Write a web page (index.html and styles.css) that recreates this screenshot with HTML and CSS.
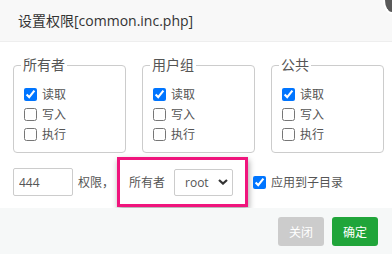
FILE: index.html
```html
<!DOCTYPE html>
<html>
<head>
    <meta charset="UTF-8">
    <title>设置权限</title>
    <link rel="stylesheet" href="styles.css">
</head>
<body>
    <div class="layer">
        <div class="layer-title">
            <span>设置权限[common.inc.php]</span>
            <span class="layer-close"></span>
        </div>

        <div class="layer-content">
            <div class="groups">
                <fieldset class="group">
                    <legend>所有者</legend>
                    <label class="check"><input type="checkbox" checked>读取</label>
                    <label class="check"><input type="checkbox">写入</label>
                    <label class="check"><input type="checkbox">执行</label>
                </fieldset>
                <fieldset class="group">
                    <legend>用户组</legend>
                    <label class="check"><input type="checkbox" checked>读取</label>
                    <label class="check"><input type="checkbox">写入</label>
                    <label class="check"><input type="checkbox">执行</label>
                </fieldset>
                <fieldset class="group">
                    <legend>公共</legend>
                    <label class="check"><input type="checkbox" checked>读取</label>
                    <label class="check"><input type="checkbox">写入</label>
                    <label class="check"><input type="checkbox">执行</label>
                </fieldset>
            </div>

            <div class="perm-row">
                <input class="perm-input" type="text" value="444">
                <span class="perm-label">权限，</span>
                <div class="owner-box">
                    <span>所有者</span>
                    <div class="select-box">
                        <span>root</span>
                        <svg width="10" height="6" viewBox="0 0 10 6">
                            <path d="M1 1 L5 4.6 L9 1" fill="none" stroke="#333" stroke-width="2.2"></path>
                        </svg>
                    </div>
                </div>
                <label class="check sub-dir"><input type="checkbox" checked>应用到子目录</label>
            </div>
        </div>

        <div class="layer-footer">
            <button class="btn btn-close">关闭</button>
            <button class="btn btn-ok">确定</button>
        </div>
    </div>
</body>
</html>
```

FILE: styles.css
```css
body {
    margin: 0;
    background: #fff;
    font-family: "Open Sans", "Noto Sans CJK SC", sans-serif;
}

.layer {
    width: 392px;
    height: 254px;
    overflow: hidden;
    display: flex;
    flex-direction: column;
}

.layer-title {
    height: 41px;
    display: flex;
    justify-content: space-between;
    align-items: flex-start;
    padding-left: 18px;
    font-size: 14px;
    line-height: 41px;
    color: #333;
    background: #f8f8f8;
    border-bottom: 1px solid #eee;
}

/* only the lower left corner of the round close button is in view */
.layer-close {
    width: 7px;
    height: 12px;
    margin-top: 0;
    background: #595959;
    border-left: 2px solid #fff;
    border-bottom: 2px solid #fff;
    border-bottom-left-radius: 100% 100%;
}

.layer-content {
    padding: 13px 0 0 13px;
}

.groups {
    display: flex;
    gap: 16px;
}

.group {
    width: 113px;
    box-sizing: border-box;
    margin: 0;
    padding: 9px 7px 8px 7px;
    border: 1px solid #ccc;
    border-radius: 4px;
    display: flex;
    flex-direction: column;
}

.group legend {
    padding: 0 2px;
    font-size: 14px;
    line-height: 20px;
    color: #555;
}

.check {
    display: flex;
    align-items: center;
    height: 20px;
    font-size: 12px;
    color: #555;
}

.check input {
    width: 13px;
    height: 13px;
    margin: 0 5px 0 3px;
}

.perm-row {
    display: flex;
    align-items: center;
    margin-top: 4px;
}

.perm-input {
    width: 60px;
    height: 28px;
    box-sizing: border-box;
    border: 1px solid #ccc;
    border-radius: 2px;
    padding: 0 5px;
    font-family: inherit;
    font-size: 12px;
    color: #555;
}

.perm-label {
    margin-left: 5px;
    font-size: 12px;
    color: #555;
}

.owner-box {
    display: flex;
    align-items: center;
    height: 50px;
    box-sizing: border-box;
    margin-left: 3px;
    padding: 0 12px 0 9px;
    border: 3px solid #f0157d;
    box-shadow: 1px 3px 6px rgba(0, 0, 0, 0.35);
    font-size: 12px;
    color: #555;
}

.select-box {
    display: flex;
    align-items: center;
    justify-content: space-between;
    width: 59px;
    height: 27px;
    box-sizing: border-box;
    margin-left: 9px;
    padding: 0 4px 0 10px;
    border: 1px solid #ccc;
    border-radius: 2px;
    color: #555;
}

.sub-dir {
    margin-left: 2px;
}

.layer-footer {
    flex: 1;
    display: flex;
    justify-content: flex-end;
    align-items: flex-start;
    gap: 8px;
    padding: 9px 14px 0 0;
    margin-top: 1px;
    background: #f6f8f8;
}

.btn {
    height: 29px;
    width: 46px;
    border: none;
    border-radius: 3px;
    font-family: inherit;
    font-size: 12px;
    color: #fff;
}

.btn-close {
    background: #ccc;
}

.btn-ok {
    background: #20a53a;
}
```
